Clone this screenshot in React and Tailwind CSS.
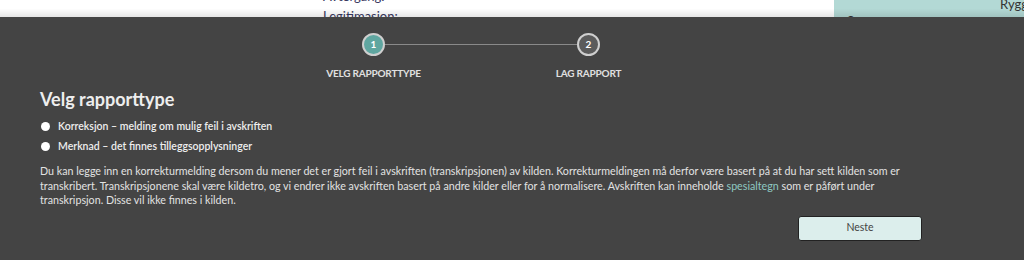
import React from "react";

function Step({ num, label, active }) {
  return (
    <div className="relative z-10 flex w-[215px] flex-col items-center">
      <div
        className={
          active
            ? "flex h-[23px] w-[23px] items-center justify-center rounded-full border-2 border-[#cfcfcf] bg-[#5fa6a0] text-[10px] font-bold text-white"
            : "flex h-[23px] w-[23px] items-center justify-center rounded-full border-2 border-[#cfcfcf] bg-[#5b5b5b] text-[10px] font-bold text-white"
        }
      >
        {num}
      </div>
      <div className="mt-[11px] text-[10px] font-bold leading-[12px] tracking-[-0.2px] text-[#e0e0e0]">
        {label}
      </div>
    </div>
  );
}

function App() {
  return (
    <div className="flex h-[260px] w-[1024px] flex-col overflow-hidden bg-[#444444] font-['Lato','Noto_Sans',sans-serif]">
      {/* Page behind the sheet */}
      <div className="relative flex h-[17px] shrink-0 overflow-hidden bg-white">
        <div className="w-[323px] shrink-0" />
        <div className="-mt-[14px] flex w-[511px] shrink-0 flex-col whitespace-nowrap text-[13px] leading-[20px] text-[#38385e]">
          <span>Avtergang:</span>
          <span>Legitimasjon:</span>
        </div>
        <div className="flex w-[220px] shrink-0 flex-col whitespace-nowrap bg-[#b3d9d5] pl-[13px] pr-[26px] text-[13px] leading-[15px] text-[#333]">
          <span className="-mt-[3px] self-end">Rygg</span>
          <span className="mt-[2px]">Status</span>
        </div>
        <div className="pointer-events-none absolute inset-0 bg-gradient-to-b from-transparent via-transparent to-black/10" />
      </div>

      {/* Report sheet */}
      <div className="ml-[40px] w-[882px] shrink-0 pt-[16px]">
        <div className="relative flex justify-center">
          <div className="absolute left-[345px] top-[11px] h-px w-[192px] bg-[#8a8a8a]" />
          <Step num="1" label="VELG RAPPORTTYPE" active />
          <Step num="2" label="LAG RAPPORT" />
        </div>

        <h2 className="mt-[10px] text-[18px] font-bold leading-[21px] text-[#eeeeee]">
          Velg rapporttype
        </h2>

        <div className="mt-[10px] flex flex-col gap-[7px] text-[10.5px] font-semibold leading-[13px] text-[#eeeeee]">
          <label className="flex items-center">
            <span className="ml-px h-[9px] w-[9px] rounded-full bg-white" />
            <span className="ml-[8px]">Korreksjon – melding om mulig feil i avskriften</span>
          </label>
          <label className="flex items-center">
            <span className="ml-px h-[9px] w-[9px] rounded-full bg-white" />
            <span className="ml-[8px]">Merknad – det finnes tilleggsopplysninger</span>
          </label>
        </div>

        <p className="mt-[11px] text-[10.7px] leading-[14.5px] text-[#e2e2e2]">
          Du kan legge inn en korrekturmelding dersom du mener det er gjort feil i avskriften (transkripsjonen) av kilden. Korrekturmeldingen må derfor være basert på at du har sett kilden som er transkribert. Transkripsjonene skal være kildetro, og vi endrer ikke avskriften basert på andre kilder eller for å normalisere. Avskriften kan inneholde{" "}
          <span className="text-[#8fc8c1]">spesialtegn</span> som er påført under transkripsjon. Disse vil ikke finnes i kilden.
        </p>

        <div className="mt-[8px] flex justify-end">
          <button className="h-[25px] w-[124px] rounded-[3px] border border-[#222] bg-[#dceeec] text-[10.5px] text-[#444]">
            Neste
          </button>
        </div>
      </div>
    </div>
  );
}

export default App;
